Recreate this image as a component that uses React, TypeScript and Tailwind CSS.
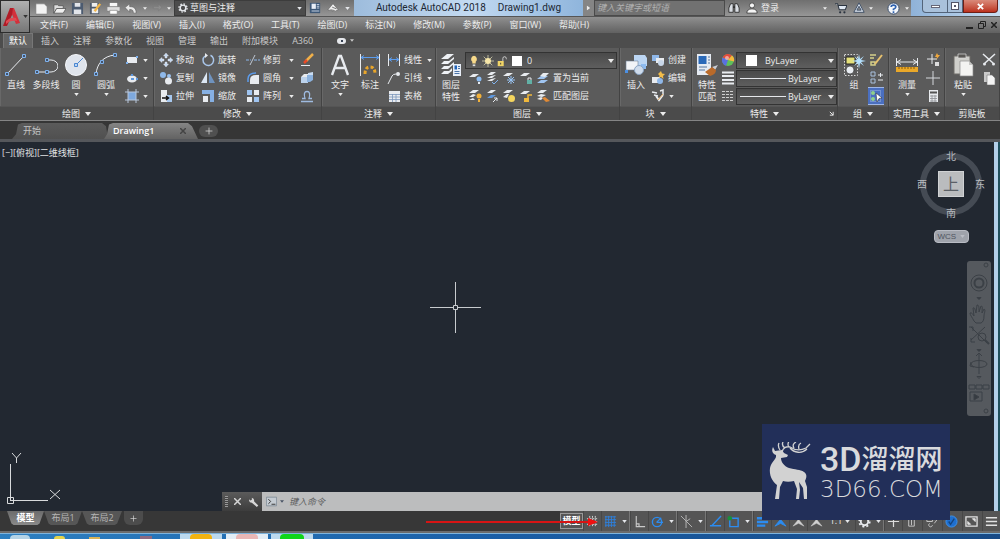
import type { ReactNode } from "react";

const menus = ["文件(F)", "编辑(E)", "视图(V)", "插入(I)", "格式(O)", "工具(T)", "绘图(D)", "标注(N)", "修改(M)", "参数(P)", "窗口(W)", "帮助(H)"];
const tabs = ["插入", "注释", "参数化", "视图", "管理", "输出", "附加模块", "A360"];

const W = "#e8ebef";
const B = "#7fb2ee";

// 24x24 drawings for the large ribbon buttons
const large: Record<string, ReactNode> = {
  line: (
    <g fill="none">
      <path d="M3 21 20 3" stroke={W} />
      <path d="M1.500 19.500h3v3h-3zM18.500 1.500h3v3h-3z" stroke={B} fill="#44546b" />
    </g>
  ),
  polyline: (
    <g fill="none">
      <path d="M3 19h14a7 6 0 0 0 0-12h-5" stroke={W} />
      <path d="M1.500 17.500h3v3h-3zM11.500 17.500h3v3h-3zM11.500 5.500h3v3h-3z" stroke={B} fill="#44546b" />
    </g>
  ),
  circle: (
    <g fill="none">
      <circle cx="12" cy="12" r="10.500" fill="#dfe4ec" stroke="#f5f7fa" />
      <path d="M12 12 19 5" stroke="#4a86d0" />
      <path d="M10.500 10.500h3v3h-3z" stroke="#4a86d0" fill="#bcd6f5" />
    </g>
  ),
  arc: (
    <g fill="none">
      <path d="M2 21C3 11 9 3 21 2" stroke={W} />
      <path d="M.5 19.500h3v3h-3zM6.500 7.500h3v3h-3zM19.500.5h3v3h-3z" stroke={B} fill="#44546b" />
    </g>
  ),
  text: <path d="m4 22 7-19h2l7 19M7 15h10" fill="none" stroke={W} strokeWidth="2.400" />,
  dimension: (
    <g fill="none">
      <path d="M2.500 1v22M21.500 1v22" stroke={W} />
      <path d="M3 4.500h18M6 2.500l-3 2 3 2M18 2.500l3 2-3 2" stroke="#5c9cec" />
      <path d="M7 21q0-7 5-7t5 7" stroke="#e9a62b" strokeWidth="3" strokeDasharray="3 2" />
    </g>
  ),
  layers: (
    <g>
      <path d="M2 6 8 1h7L9 6zM2 11l3-3h5l5-4v2l-6 5zM2 16l3-3h5l5-4v2l-6 5zM2 21l3-3h5l3-3v3l-4 3z" fill="#eef1f5" />
      <path d="M14 11h8v12h-8z" fill="#e8eef7" />
      <path d="M15.500 12.500h2.500v4h-2.500z" fill="#1f63b8" />
      <path d="M19 13.500h2M19 15.500h2M15.500 18.500h5M15.500 20.500h5" stroke="#4b74a8" />
    </g>
  ),
  insert: (
    <g>
      <path d="M10 2h11l2 3v8H10z" fill="#bcd6f3" />
      <path d="M2 8h12v9H2z" fill="#f2f4f7" stroke="#6b7f99" strokeWidth=".6" />
      <path d="M17 11h5v5h-5z" fill="#8dbbf0" />
      <circle cx="15" cy="17" r="4.500" fill="#cfdcec" stroke="#8aa4c4" />
      <path d="M1 17h3v3H1z" fill="#4d90e2" />
    </g>
  ),
  matchprops: (
    <g>
      <path d="M2 1h14v21H2z" fill="#e6ebf2" />
      <path d="M3.500 3h8v8h-8z" fill="#2a69b8" />
      <path d="M13 4h2M13 7h2M13 10h2M4 14h8M4 17h6" stroke="#55779f" />
      <path d="m23 12-6 2 3 3z" fill="#c9ccd2" />
      <path d="m17 14-7 5 5 4c4-1 6-3 6-6z" fill="#b96a2a" />
    </g>
  ),
  group: (
    <g>
      <path d="M2.500 1.500h13v21h-13z" fill="none" stroke="#d9d9d9" strokeDasharray="1.500 1.500" />
      <path d="M4 4h9v7H4z" fill="#e4e07a" stroke="#222" />
      <circle cx="8" cy="17" r="4" fill="#e9edf2" stroke="#222" strokeWidth=".6" />
      <path d="m17 1 1 5 4-3-3 4 5 1-5 1 3 4-4-3-1 6-1-6-4 3 3-4-5-1 5-1-3-4 4 3z" fill="#b4e1ff" />
    </g>
  ),
  measure: (
    <g>
      <path d="M1.500 5v8M22.500 5v8M2 9h20M6 6.500 2 9l4 2.500M18 6.500 22 9l-4 2.500" fill="none" stroke={W} />
      <path d="M1 14h22v5H1z" fill="#eaa829" />
      <path d="M4 14v2M7 14v2M10 14v2M13 14v2M16 14v2M19 14v2" stroke="#8a5b07" />
    </g>
  ),
  paste: (
    <g>
      <path d="M3 3h16v18H3z" fill="#cfcfcb" stroke="#6f6d69" />
      <path d="M7 1h8v4H7z" fill="#5a5855" stroke="#ddd" strokeWidth=".7" />
      <path d="M9 8h9l4 4v11H9z" fill="#f3f3f1" stroke="#8b8b89" strokeWidth=".7" />
      <path d="M18 8v4h4" fill="#c7c7c5" />
    </g>
  ),
};

// 14x14 drawings for the compact buttons
const small: Record<string, ReactNode> = {
  rect: <><path d="M2 4h10v6H2z" fill={W} /><path d="M1 9h2v2H1zM11 3h2v2h-2z" fill={B} /></>,
  ellipse: <><ellipse cx="7" cy="8" rx="5" ry="3.500" fill={W} /><path d="M6 7h3v2H6zM6 3h2v2H6zM11 7h2v2h-2z" fill="#5f98de" /></>,
  hatch: <><path d="M3 3h8v8H3z" fill="#7ea9df" /><path d="M3 0v14M11 0v14M0 3h14M0 11h14" stroke="#b8c7dc" /></>,
  move: <path d="m7 0 2.500 3H8v2H6V3H4.500zM7 14l2.500-3H8V9H6v2H4.500zM0 7l3-2.500V6h2v2H3v1.500zM14 7l-3-2.500V6H9v2h2v1.500z" fill="#c5d9f1" stroke={W} strokeWidth=".4" />,
  copy: <><circle cx="4" cy="4" r="3" fill="#8fb9ea" /><circle cx="10" cy="5" r="2" fill="#9cc2ee" /><circle cx="9.500" cy="10" r="3.500" fill={W} /></>,
  stretch: <><path d="M2 1h6v12H2z" fill={W} /><path d="M8 6h5v7H8z" fill="#a7c8ef" /><path d="M3 9h6M7 7l2.500 2L7 11" stroke="#111" fill="none" strokeWidth="1.500" /></>,
  rotate: <><path d="M9.500 2.300A5.300 5.300 0 1 1 4 3" fill="none" stroke="#a9c6ea" strokeWidth="1.500" /><path d="m4 0 3 2.500L4 5z" fill={W} /></>,
  mirror: <><path d="M6 1v11H0z" fill="#dce7f4" /><path d="M8 1v11h6z" fill="#6f93bf" /></>,
  scale: <><path d="M1 1h12v12H9V5H1z" fill="#86b0e3" /><path d="M2 7h5v6H2z" fill={W} /></>,
  trim: <><path d="M0 7h5M8 7h6" stroke="#8db8ec" strokeDasharray="3 1" /><path d="m4 12 5-10" stroke="#bfc8d4" /></>,
  fillet: <><path d="M4 13V9q0-5 6-5h3v9z" fill={W} /><path d="M2 11V8q0-6 8-6" fill="none" stroke="#5c9cec" strokeWidth="1.500" /></>,
  array: <><path d="M1 1h5v5H1z" fill="#9fc4f0" /><path d="M8 1h5v5H8zM1 8h5v5H1z" fill={W} /><path d="M8 8h5v5H8z" fill="#9fc4f0" /></>,
  erase: <><path d="M13 1 6 8" stroke="#f0b04a" strokeWidth="2.500" /><path d="M7 7 4 10" stroke="#e94b28" strokeWidth="2.500" /><path d="M1 12.500h9" stroke={W} /></>,
  explode: <><path d="M1 6h7v6H1z" fill="#bdd3ec" /><path d="m1 6 3-3h4v3z" fill={W} /><path d="M7 4h6v5l-3 2H7z" fill="#8cb2de" /><path d="m8 2 5-1v3H8z" fill="#c9dcf2" /></>,
  offset: <path d="M1 12.500h12M2 9.500h3q-2-7 2-7t2 7h3" fill="none" stroke="#9fbbe0" strokeWidth="1.300" />,
  linear: <><path d="M1.500 1v12M12.500 1v12" stroke={W} /><path d="M2 6.500h10M5 4.500l-3 2 3 2M9 4.500l3 2-3 2" stroke="#5c9cec" fill="none" /></>,
  leader: <><path d="M1 13 5 5q1-2 4-2" fill="none" stroke={W} /><circle cx="11" cy="3" r="2" fill={W} /></>,
  table: <><path d="M2 2h11v11H2z" fill={W} /><path d="M2 5.500h11M2 8h11M2 10.500h11M5.500 5v8M9 5v8" stroke="#7b97bb" strokeWidth=".8" /></>,
  bulb: <><path d="M7 1a4 4 0 0 0-2 7v2h4V8a4 4 0 0 0-2-7" fill="#f7d98a" /><path d="M5.500 11h3v2h-3z" fill="#ddd" /></>,
  sun: <><path d="M7 0v14M0 7h14M2 2l10 10M12 2 2 12" stroke="#cdc9a6" /><circle cx="7" cy="7" r="3.500" fill="#f6e6a8" /></>,
  lock: <><path d="M2 7h7v6H2z" fill="#f0d467" /><path d="M8 7V4q0-2 2-2t2 2v1" fill="none" stroke="#ddd" /><path d="M5 9h1v2H5z" fill="#333" /></>,
  layerOff: <><path d="m1 6 4-3h6L7 6z" fill={W} /><circle cx="11" cy="8" r="2.500" fill="#8cbcf2" /><path d="M10 11h2v2h-2z" fill={W} /></>,
  layerIso: <><path d="m2 4 4-3h5L7 4zM2 7l4-2 5-1-4 3zM2 10l4-2 5-1-4 3z" fill={W} /><path d="m7 11 2 2 4-4" stroke={B} fill="none" /></>,
  layerFreeze: <><path d="m1 5 4-3h6L7 5z" fill={W} /><path d="M9 5v8M5 9h8M6 6l6 6M12 6l-6 6" stroke="#9ac5f5" /></>,
  layerLock: <><path d="m1 5 4-3h6L7 5z" fill={W} /><path d="M8 9h5v4H8z" fill="#62b1a6" /><path d="M9 9V7h3v2" fill="none" stroke={W} /></>,
  layerSet: <><path d="m1 12 4-3h7l-4 3zM1 8l4-3h7L8 8z" fill="#9fc4f0" /><path d="m4 5 3-3h6L9 6z" fill={W} /></>,
  layerOn: <><path d="m1 4 4-3h6L7 4zM1 8l4-3 3 1-3 2zM1 11l4-2 2 2z" fill={W} /><circle cx="11" cy="7" r="2.500" fill="#f2b13a" /><path d="M10 10h2v3h-2z" fill="#f2b13a" /></>,
  layerUniso: <><path d="m2 4 4-3h5L7 4z" fill={W} /><path d="m2 9 4-3h5L7 9z" fill="#5f98de" /><path d="m8 13 4-4M9 9h3v3" stroke={W} fill="none" /></>,
  layerThaw: <><path d="m1 4 4-3h6L7 4zM1 8l4-3h2L5 9z" fill={W} /><circle cx="9.500" cy="9.500" r="3.500" fill="#f4d55e" /></>,
  layerUnlock: <><path d="m1 5 4-3h6L7 5z" fill={W} /><path d="M5 9h5v4H5z" fill="#f0b83c" /><path d="M9 9V6h4" fill="none" stroke="#f0b83c" strokeWidth="1.500" /></>,
  layerMatch: <><path d="m1 4 4-3h6L7 4zM1 7l4-2 5 1-4 2zM1 10l4-2 2 1-2 2z" fill={W} /><path d="m6 9 3-1 5 4-4 1z" fill="#e18a35" /></>,
  blockCreate: <><path d="M1 2h7v6H1z" fill="#8fb7e8" /><path d="M5 5h8v5H5z" fill={W} /><circle cx="10" cy="10" r="3" fill="#c7d6e8" /></>,
  blockEdit: <><path d="M1 6h8v6H1z" fill={W} /><circle cx="9" cy="10" r="3" fill="#8fb7e8" /><path d="m10 0 1 2.500 3 .5-2 2 .5 3L10 6 8 7l.5-2.500L7 3z" fill="#f3bd4a" /></>,
  blockAttr: <><path d="m1 3 5 1M3 6l4 1M9 2l3-1v5" stroke={W} fill="none" strokeWidth="1.500" /><path d="m5 7 3 4 4-5" stroke={W} fill="none" strokeWidth="2" /><path d="m7 11 5-6" stroke="#e9ae61" /></>,
  wheel: <><circle cx="7" cy="7" r="6" fill="#5fbf5a" /><path d="M7 7 1.500 4.500A6 6 0 0 1 11 2.500z" fill="#e24a3b" /><path d="m7 7 4-4.500a6 6 0 0 1 2 6z" fill="#f5b83b" /><path d="M7 7 1.500 4.500A6 6 0 0 0 5 12.700z" fill="#5a6fe0" /><circle cx="6" cy="5" r="2" fill="#fff" opacity=".5" /></>,
  weight: <path d="M1 1.500h12M1 5h12M1 9h12M1 12.500h12" stroke={W} strokeWidth="1.800" />,
  linetype: <path d="M1 2.500h12M1 5.500h12M1 8.500h12M1 11.500h12" stroke="#cfcfcf" strokeDasharray="3 1" />,
  ungroup: <><path d="M1 2h6M1 5h4M2 9h4v3H2z" stroke="#d5d08a" fill="none" strokeWidth="1.500" /><path d="m6 11 7-9" stroke="#e7c16e" strokeWidth="2" /></>,
  groupEdit: <><path d="M2 1h4v4H2zM2 8h4v4H2z" fill="none" stroke="#a9c1de" /><path d="M9 4h5M9 9h5M11.500 2v4" stroke={W} /></>,
  groupSelect: <><path d="M1.500 1.500h10v11h-10z" fill="none" stroke="#9db6e2" strokeDasharray="1 1" /><circle cx="4" cy="4" r="2" fill="#8fd08c" /><circle cx="4" cy="10" r="2" fill="#8fd08c" /><path d="m7 4 6 5-3 .5L8 13z" fill="#fff" stroke="#222" strokeWidth=".5" /></>,
  quickselect: <><path d="M6 1v10M1 6h10" stroke={W} /><path d="M9 9h4v4H9z" fill="#ddd" /><path d="m11 0-2 4h2l-1 3 4-5h-2z" fill="#f0a83c" /></>,
  point: <path d="M7 0v5M7 9v5M0 7h5M9 7h5M6 6h2v2H6z" fill="none" stroke="#d5d8dc" />,
  calc: <><path d="M3 1h9v12H3z" fill={W} /><path d="M4 3.500h7" stroke="#555" strokeWidth="2" /><path d="M4 7h7M4 9.500h7M4 12h7M6 6v7M9 6v7" stroke="#8a8d92" strokeWidth=".8" /></>,
  cut: <><path d="m1 1 10 9M13 1 3 10" stroke={W} strokeWidth="1.500" /><circle cx="2.500" cy="11" r="1.500" fill={W} /><circle cx="11.500" cy="11" r="1.500" fill={W} /></>,
  pages: <><path d="M2 1h6v10H2z" fill="#c9c9c9" /><path d="M5 4h5l3 3v7H5z" fill="#f4f4f4" stroke="#777" strokeWidth=".6" /></>,
  newfile: <path d="M1 2h9l3 3v8H1z" fill="#f3f3f3" stroke="#777" strokeWidth=".6" />,
  open: <><path d="M1 3h4l1 1h5v3H4l-3 5z" fill="#ddd" stroke="#444" strokeWidth=".7" /><path d="M4 7h10l-3 5H1z" fill="#f0f0f0" stroke="#444" strokeWidth=".7" /></>,
  save: <><path d="M1 1h12v12H1z" fill="#4c5b70" /><path d="M4 1h6v4H4zM3 8h8v5H3z" fill="#e2e5ea" /></>,
  saveas: <><path d="M1 1h10v12H1z" fill="#4f5a6b" /><path d="M3 7h7v5H3zM3 1h6v4H3z" fill="#eee" /><path d="m6 10 6-8" stroke="#f3b647" strokeWidth="2.500" /></>,
  print: <><path d="M3 1h8v4H3z" fill="#f7f7f7" /><path d="M0 5h14v5H0z" fill="#dedede" stroke="#666" strokeWidth=".6" /><path d="M3 9h8v4H3z" fill="#fff" stroke="#777" strokeWidth=".6" /></>,
  undo: <path d="M0 6 5 2v3c5 0 7 2 7 7H9C9 9 8 8 5 8v3z" fill="#e9e9e9" stroke="#555" strokeWidth=".6" />,
  redo: <path d="M14 6 9 2v3H2v3h7v3z" fill="#8d8d8d" stroke="#777" strokeWidth=".6" />,
  gear: <><circle cx="7" cy="7" r="4" fill="none" stroke={W} strokeWidth="2" /><circle cx="7" cy="7" r="5.700" fill="none" stroke={W} strokeWidth="1.800" strokeDasharray="2.200 2.270" /></>,
  sheet: <><path d="M1 1h12v12H1z" fill="#3d5877" /><path d="M3 2h5v6H3z" fill="#e8eef7" /><path d="M9 3h3M9 5h3M9 7h3M3 10.500h9" stroke="#d7e3f2" /></>,
  plan: <><path d="m1 9 6-7 6 7-4 2z" fill="#eee" stroke="#555" strokeWidth=".6" /><path d="M4 9l5 1M6 6l5 2" stroke="#666" /></>,
  find: <><path d="M1 12V7l2-5h3v10zM8 12V2h3l2 5v5z" fill="#d9dde3" stroke="#292929" /><path d="M6 6h2" stroke="#292929" strokeWidth="2" /></>,
  user: <><circle cx="7" cy="4" r="3" fill="#f4f4f4" stroke="#3a3a3a" /><path d="M1 13q0-5 6-5t6 5z" fill="#f4f4f4" stroke="#3a3a3a" /></>,
  cart: <><path d="M0 2h3l2 7h7l2-5H4" fill="#dfe8f2" stroke="#2b3440" strokeWidth="1.200" /><circle cx="6" cy="12" r="1.300" fill="#2b3440" /><circle cx="11" cy="12" r="1.300" fill="#2b3440" /></>,
  a360: <><path d="m7 1 6 11H1z" fill="#dbe3ee" stroke="#33455e" /><path d="m7 5 2.500 4.500h-5z" fill="#8e8e8e" stroke="#33455e" /></>,
  help: <><circle cx="7" cy="7" r="6" fill="#f5f8fc" stroke="#34496b" /><path d="M4.500 5.500Q4.500 3.300 7 3.300t2.500 2Q9.500 6.500 7 7.700V9M7 10v1.800" fill="none" stroke="#2f62b0" strokeWidth="1.800" /></>,
  wrench: <path d="m13 12-6-6q1-4-3-5v3L2 5 0 3q0 5 4 5l7 6z" fill="#d7d7d7" />,
  prompt: <><path d="M.5 1.500h13v11H.5z" fill="#c4cbd2" stroke="#7c8894" /><path d="m3 4 3 3-3 3M7 10.500h5" fill="none" stroke="#333" strokeWidth="1.200" /></>,
  snap: <path d="M4 1v12M7 1v12M10 1v12M1 4h12M1 7h12M1 10h12" stroke="#d8d8d8" strokeDasharray="2 1" />,
  grid: <path d="M2 1v12M5 1v12M8 1v12M11 1v12M1 2h12M1 5h12M1 8h12M1 11h12" stroke="#2f7fdc" />,
  ortho: <path d="M3.500 1v11.500H13M3.500 9.500h3v3" fill="none" stroke="#c9c9c9" strokeWidth="1.200" />,
  polar: <><circle cx="6.500" cy="7.500" r="5" fill="none" stroke="#2c8cf0" strokeWidth="1.500" /><path d="M6 8h7M6 8l5-5" stroke="#2c8cf0" strokeWidth="1.300" /></>,
  iso: <path d="m1 1 12 12M6.500 0v14M6.500 7 11 4" stroke="#b9b9b9" />,
  track: <path d="M13 1 3 11.500h10M1 11.500h2" stroke="#2c8cf0" strokeWidth="1.500" fill="none" />,
  osnap: <><path d="M3 3.500h9v9H3z" fill="none" stroke="#2c8cf0" strokeWidth="1.500" /><circle cx="3" cy="3.500" r="2.500" fill="#18903c" /></>,
  lwt: <path d="M1 3.500h9M1 7.500h12M1 11.500h9" stroke="#2c8cf0" strokeWidth="2.500" />,
  annoBlue: <path d="m7 1 1 5 5 6-6-3-6 3 5-6z" fill="#2c8cf0" stroke="#2c8cf0" />,
  anno: <path d="m7 1 1 5 5 6-6-3-6 3 5-6z" fill="#d0d0d0" stroke="#d0d0d0" strokeWidth=".5" />,
  plus: <path d="M7 1v12M1 7h12" stroke="#dcdcdc" strokeWidth="1.300" />,
  monitor: <path d="M3 4h8M4 4v8h6V4M7 5v6M5 2h4" stroke="#c9c9c9" fill="none" />,
  isolate: <path d="M2 2h6v5H2zM8 5h5l-3 4M5 9a2 2 0 1 0 3 2" stroke="#c9c9c9" fill="none" />,
  accel: <><circle cx="7" cy="7" r="6" fill="#1e6fd0" stroke="#3d93ee" /><path d="m4 7 2 3 4-6" stroke="#15457f" fill="none" strokeWidth="1.500" /></>,
  full: <><path d="M1 2h12v10H1z" fill="none" stroke="#e2e2e2" strokeWidth="1.400" /><path d="M8 4h3v3zM3 7v3h3z" fill="#e2e2e2" stroke="#e2e2e2" /></>,
  bars: <path d="M1 3h12M1 7h12M1 11h12" stroke="#e2e2e2" strokeWidth="1.500" />,
};

function Big({ name }: { name: string }) {
  return (
    <svg viewBox="0 0 24 24" className="size-6 shrink-0" aria-hidden="true">
      {large[name]}
    </svg>
  );
}

function Sm({ name, className = "size-[14px]" }: { name: string; className?: string }) {
  return (
    <svg viewBox="0 0 14 14" className={`shrink-0 ${className}`} aria-hidden="true">
      {small[name]}
    </svg>
  );
}

function Caret({ className = "w-[5px] h-[3px] text-gray-200" }: { className?: string }) {
  return (
    <svg viewBox="0 0 6 4" className={`shrink-0 ${className}`} aria-hidden="true">
      <path d="M0 0h6L3 4z" fill="currentColor" />
    </svg>
  );
}

function BigButton({ icon, lines, caret, className = "w-[30px]" }: { icon: string; lines: string[]; caret?: boolean; className?: string }) {
  return (
    <button className={`flex flex-col items-center pt-[5px] shrink-0 ${className}`}>
      <Big name={icon} />
      <span className="mt-[2px] flex flex-col whitespace-nowrap leading-3">
        {lines.map((l) => (
          <span key={l}>{l}</span>
        ))}
      </span>
      {caret && <Caret className="w-[5px] h-[3px] mt-[2px]" />}
    </button>
  );
}

function Tool({ icon, label, caret, gap = "ml-[8px]" }: { icon: string; label?: string; caret?: boolean; gap?: string }) {
  return (
    <button className="flex items-center h-[18px] whitespace-nowrap" aria-label={label ?? icon}>
      <Sm name={icon} />
      {label && <span className="ml-[3px]">{label}</span>}
      {caret && <Caret className={`w-[5px] h-[3px] ${gap}`} />}
    </button>
  );
}

function Panel({ title, caret = true, launcher, children }: { title: string; caret?: boolean; launcher?: boolean; children: ReactNode }) {
  return (
    <section className="flex flex-col border-r border-[#434343] shadow-[inset_1px_0_0_#686868] min-w-0">
      <div className="flex h-[58px] pl-px">{children}</div>
      <footer className="relative flex items-center justify-center gap-[5px] h-[14px] bg-[#4b4b4b] border-t border-[#555] whitespace-nowrap">
        {title}
        {caret && <Caret className="w-[6px] h-[4px]" />}
        {launcher && (
          <button aria-label="特性选项板" className="absolute right-[3px]">
            <svg viewBox="0 0 6 6" className="size-[5px]" aria-hidden="true">
              <path d="M1 1l4 4M5 1v4H1" stroke="#e5e5e5" fill="none" strokeWidth="1.200" />
            </svg>
          </button>
        )}
      </footer>
    </section>
  );
}

function Combo({ label, value, pad, swatch, line }: { label: string; value: string; pad: string; swatch?: boolean; line?: boolean }) {
  return (
    <div className="flex items-center h-[17px] pl-[3px] pr-[2px] border border-[#333] bg-linear-to-b from-[#4a4a4a] to-[#5e5e5e]">
      {swatch && <span className="size-[11px] ml-[6px] bg-white" />}
      {line && <span className="flex-1 h-px bg-gray-200" />}
      <select aria-label={label} className={`appearance-none outline-none bg-transparent leading-3 ${pad}`}>
        <option>{value}</option>
      </select>
      <Caret className="w-[6px] h-[4px] ml-auto" />
    </div>
  );
}

function TitleBar() {
  return (
    <div className="flex h-[17px] bg-linear-to-b from-[#6f6f6f] to-[#969696] border-b border-[#555]">
      <div className="flex items-center pl-[5px] gap-[5px] w-[144px] shrink-0">
        {["newfile", "open", "save", "saveas", "print", "undo"].map((n) => (
          <button key={n} aria-label={n}>
            <Sm name={n} className="size-[13px]" />
          </button>
        ))}
        <Caret className="w-[4px] h-[3px]" />
        <Sm name="redo" className="size-[10px]" />
        <Caret className="w-[4px] h-[3px]" />
      </div>
      <label className="flex items-center gap-[2px] w-[132px] shrink-0 px-[3px] bg-[#4c4c4c] border border-[#3c3c3c]">
        <Sm name="gear" className="size-[10px]" />
        <select aria-label="工作空间" className="appearance-none outline-none bg-transparent flex-1 leading-3">
          <option>草图与注释</option>
        </select>
        <Caret />
      </label>
      <div className="flex items-center gap-[6px] pl-[3px] w-[48px] shrink-0">
        <Sm name="sheet" className="size-[12px]" />
        <Sm name="plan" className="size-[12px]" />
        <Caret />
      </div>
      <h1 className="flex items-center justify-center gap-3 grow-[229] basis-0 font-[Roboto,sans-serif] text-[10px] text-[#1c2733] whitespace-nowrap bg-linear-to-r from-[#9dbcdc] via-[#c3daf1] to-[#8fb5dc]">
        <span>Autodesk AutoCAD 2018</span>
        <span>Drawing1.dwg</span>
      </h1>
      <button aria-label="展开搜索" className="flex items-center justify-center w-[11px] shrink-0 bg-[#858585]">
        <Caret className="w-[5px] h-[4px] -rotate-90" />
      </button>
      <input
        aria-label="搜索"
        placeholder="键入关键字或短语"
        className="grow-[125] basis-0 min-w-0 px-[2px] bg-[#717171] border border-[#4a4a4a] italic outline-none placeholder:text-[#b2b2b2]"
      />
      <div className="flex items-center w-[186px] shrink-0 pl-[3px]">
        <Sm name="find" className="size-[12px]" />
        <Sm name="user" className="size-[12px] ml-[6px]" />
        <a href="#login" className="ml-[3px]">登录</a>
        <Caret className="w-[4px] h-[3px] ml-[44px]" />
        <Sm name="cart" className="size-[12px] ml-[8px]" />
        <Sm name="a360" className="size-[12px] ml-[6px]" />
        <Caret className="w-[4px] h-[3px] ml-[4px]" />
        <Sm name="help" className="size-[13px] ml-[14px]" />
        <Caret className="w-[4px] h-[3px] ml-[5px]" />
      </div>
      <div className="flex justify-end w-[89px] shrink-0 pr-[2px] bg-linear-to-r from-[#8fb2d8] to-[#c8def2]">
        <button aria-label="最小化" className="flex items-end justify-center w-[26px] h-[13px] pb-[4px] rounded-bl bg-[#a9c1db] border border-t-0 border-[#53647a]">
          <span className="w-[9px] h-[3px] bg-white border border-[#667]" />
        </button>
        <button aria-label="还原" className="flex items-center justify-center w-[15px] h-[13px] bg-[#a9c1db] border border-t-0 border-l-0 border-[#53647a]">
          <span className="grid place-items-center size-[8px] bg-white border border-[#556]">
            <span className="size-[2px] bg-[#556]" />
          </span>
        </button>
        <button aria-label="关闭" className="flex items-center justify-center w-[35px] h-[13px] rounded-br bg-linear-to-b from-[#d98a7a] to-[#bb2f1c] border border-t-0 border-[#6d1f16]">
          <svg viewBox="0 0 8 8" className="size-[7px]" aria-hidden="true">
            <path d="m1 1 6 6M7 1 1 7" stroke="#fff" strokeWidth="2" />
          </svg>
        </button>
      </div>
    </div>
  );
}

function Ribbon() {
  return (
    <div className="grid grid-cols-[154fr_168fr_114fr_184fr_72fr_146fr_51fr_56fr_55fr] bg-[#5b5b5b] border-b border-[#858585]">
      <Panel title="绘图">
        <BigButton icon="line" lines={["直线"]} />
        <BigButton icon="polyline" lines={["多段线"]} />
        <BigButton icon="circle" lines={["圆"]} caret />
        <BigButton icon="arc" lines={["圆弧"]} caret />
        <div className="pt-[3px] pl-[4px]">
          <Tool icon="rect" caret gap="ml-[4px]" />
          <Tool icon="ellipse" caret gap="ml-[4px]" />
          <Tool icon="hatch" caret gap="ml-[4px]" />
        </div>
      </Panel>
      <Panel title="修改">
        <div className="grid grid-cols-[42px_45px_54px_18px] content-start pt-[3px] pl-[4px]">
          <Tool icon="move" label="移动" />
          <Tool icon="rotate" label="旋转" />
          <Tool icon="trim" label="修剪" caret />
          <Tool icon="erase" />
          <Tool icon="copy" label="复制" />
          <Tool icon="mirror" label="镜像" />
          <Tool icon="fillet" label="圆角" caret />
          <Tool icon="explode" />
          <Tool icon="stretch" label="拉伸" />
          <Tool icon="scale" label="缩放" />
          <Tool icon="array" label="阵列" caret />
          <Tool icon="offset" />
        </div>
      </Panel>
      <Panel title="注释">
        <div className="flex pl-[2px]">
          <BigButton icon="text" lines={["文字"]} caret />
          <BigButton icon="dimension" lines={["标注"]} />
          <div className="pt-[3px] pl-[2px]">
            <Tool icon="linear" label="线性" caret gap="ml-[5px]" />
            <Tool icon="leader" label="引线" caret gap="ml-[5px]" />
            <Tool icon="table" label="表格" />
          </div>
        </div>
      </Panel>
      <Panel title="图层">
        <BigButton icon="layers" lines={["图层", "特性"]} className="w-[28px]" />
        <div className="flex-1 pt-[4px] pr-[2px]">
          <div className="flex items-center gap-[2px] h-[17px] pl-[2px] pr-[2px] border border-[#333] bg-linear-to-b from-[#4a4a4a] to-[#5e5e5e]">
            <Sm name="bulb" className="size-[12px]" />
            <Sm name="sun" className="size-[12px]" />
            <Sm name="lock" className="size-[12px]" />
            <span className="size-[10px] ml-[2px] bg-white" />
            <select aria-label="图层" className="appearance-none outline-none bg-transparent flex-1 pl-[3px] leading-3">
              <option>0</option>
            </select>
            <Caret className="w-[6px] h-[4px]" />
          </div>
          <div className="flex gap-[3px] pl-[3px]">
            {["layerOff", "layerIso", "layerFreeze", "layerLock"].map((n) => (
              <Tool key={n} icon={n} />
            ))}
            <Tool icon="layerSet" label="置为当前" />
          </div>
          <div className="flex gap-[3px] pl-[3px]">
            {["layerOn", "layerUniso", "layerThaw", "layerUnlock"].map((n) => (
              <Tool key={n} icon={n} />
            ))}
            <Tool icon="layerMatch" label="匹配图层" />
          </div>
        </div>
      </Panel>
      <Panel title="块">
        <BigButton icon="insert" lines={["插入"]} />
        <div className="pt-[3px]">
          <Tool icon="blockCreate" label="创建" />
          <Tool icon="blockEdit" label="编辑" />
          <Tool icon="blockAttr" caret gap="ml-[4px]" />
        </div>
      </Panel>
      <Panel title="特性" launcher>
        <BigButton icon="matchprops" lines={["特性", "匹配"]} className="w-[28px]" />
        <div className="pt-[3px]">
          <Tool icon="wheel" />
          <Tool icon="weight" />
          <Tool icon="linetype" />
        </div>
        <div className="flex flex-col flex-1 gap-px pt-[4px] pl-px">
          <Combo label="对象颜色" value="ByLayer" pad="ml-[8px]" swatch />
          <Combo label="线宽" value="ByLayer" pad="ml-[2px] mr-[6px]" line />
          <Combo label="线型" value="ByLayer" pad="ml-[2px] mr-[6px]" line />
        </div>
      </Panel>
      <Panel title="组">
        <BigButton icon="group" lines={["组"]} />
        <div className="pt-[3px]">
          <Tool icon="ungroup" />
          <Tool icon="groupEdit" />
          <div className="-ml-px px-px bg-[#4a6fc0] border-y border-[#9fb6e6]">
            <button className="flex items-center h-4" aria-label="组选择">
              <Sm name="groupSelect" />
            </button>
          </div>
        </div>
      </Panel>
      <Panel title="实用工具">
        <BigButton icon="measure" lines={["测量"]} caret className="w-[34px]" />
        <div className="pt-[3px] pl-[2px]">
          <Tool icon="quickselect" />
          <Tool icon="point" />
          <Tool icon="calc" />
        </div>
      </Panel>
      <Panel title="剪贴板" caret={false}>
        <BigButton icon="paste" lines={["粘贴"]} caret className="w-[34px]" />
        <div className="pt-[3px] pl-[2px]">
          <Tool icon="cut" />
          <Tool icon="pages" />
        </div>
      </Panel>
    </div>
  );
}

function FileTabs() {
  return (
    <nav className="flex items-end h-[21px] pl-[12px] bg-[#363636] border-b-[3px] border-[#55575b]">
      <a href="#start" className="flex items-center w-[96px] h-[16px] pl-[11px] text-[#c4c4c4] bg-linear-to-b from-[#5b5b5b] to-[#505050] [clip-path:polygon(0_100%,4px_70%,6px_10%,10px_0,90px_0,94px_20%,100%_100%)]">
        开始
      </a>
      <div className="flex items-center w-[94px] h-[16px] -ml-[4px] pl-[9px] pr-[12px] bg-linear-to-b from-[#858585] to-[#636363] [clip-path:polygon(0_100%,3px_70%,5px_10%,9px_0,84px_0,88px_20%,100%_100%)]">
        <a href="#drawing1" className="font-semibold text-white">Drawing1</a>
        <button aria-label="关闭图形" className="ml-auto">
          <svg viewBox="0 0 6 6" className="size-[6px]" aria-hidden="true">
            <path d="m0 0 6 6M6 0 0 6" stroke="#444" strokeWidth="1.500" />
          </svg>
        </button>
      </div>
      <button aria-label="新图形" className="flex items-center justify-center w-[19px] h-[12px] mb-[2px] ml-px rounded-md bg-[#505050]">
        <Sm name="plus" className="size-[8px]" />
      </button>
    </nav>
  );
}

function ViewCube() {
  return (
    <div className="absolute top-[8px] right-[9px] flex flex-col items-center w-[68px] text-[10px] text-[#b9bcc0]">
      <div className="relative grid place-items-center size-[68px]">
        <div className="absolute size-[62px] rounded-full border-[6px] border-[#454b54]" />
        <span className="absolute top-0 leading-3">北</span>
        <span className="absolute -bottom-px leading-3">南</span>
        <span className="absolute left-0 leading-3">西</span>
        <span className="absolute right-0 leading-3">东</span>
        <span className="relative grid place-items-center size-[26px] bg-[#babcbe] border border-[#d0d2d4] text-[16px] leading-4 text-[#5b6066]">上</span>
      </div>
      <button className="flex items-center w-[35px] h-[13px] mt-[12px] px-[3px] rounded-sm bg-[#9fa3ab] border border-[#b9bcc4] font-['Liberation_Sans',sans-serif] text-[8px] text-[#4f545e]">
        WCS <Caret className="w-[5px] h-[3px] ml-auto text-[#bbbec6]" />
      </button>
    </div>
  );
}

function NavBar() {
  return (
    <div className="absolute top-[119px] right-[3px] w-[24px] rounded-[3px] bg-[#55595e]">
      <svg viewBox="0 0 24 155" className="w-full" fill="none" stroke="#3b4046" aria-hidden="true">
        <circle cx="19" cy="4" r="2" />
        <circle cx="12" cy="22" r="8" />
        <circle cx="12" cy="22" r="4.500" strokeWidth="2" />
        <path d="M10 36.500h4l-2 2z" fill="#363b41" />
        <path d="M7 60c-2-4-4-6-4-8 2-1 3 2 4 3l-1-8c2-1 2 2 3 5l1-8c2 0 2 2 2 7l2-6c2 0 1 3 1 7l2-4c2 1 0 4 0 7 0 4-1 6-3 7H9z" />
        <path d="m4 66 16 16M18 66 4 79M2 66h4v4M4 77v4h4" />
        <circle cx="15" cy="76" r="4" />
        <path d="m18 79 4 4" strokeWidth="2" />
        <path d="M10 88.500h4l-2 2z" fill="#363b41" />
        <path d="M12 92v21M9 95l3-3 3 3" />
        <ellipse cx="12" cy="103" rx="8" ry="3.500" />
        <path d="m4 101-1 4 4 1M10 115.500h4l-2 2z" />
        <path d="M2 124h6v4H2zM9 124h6v4H9zM16 124h6v4h-6zM3 131h12v9H3z" />
        <path d="m7 133 5 3-5 3z" fill="#363b41" />
        <circle cx="19" cy="150" r="2" />
      </svg>
    </div>
  );
}

function Canvas() {
  return (
    <main className="flex flex-1">
      <div className="relative flex-1 bg-[#222831]">
        <p className="pl-[2px] pt-[5px] leading-3 text-[#e0e2e4]">[−][俯视][二维线框]</p>

        <svg viewBox="0 0 51 51" className="absolute left-[430px] top-[140px] size-[51px]" fill="none" stroke="#c8cbce" aria-hidden="true">
          <path d="M25.500 0v23M25.500 28v23M0 25.500h23M28 25.500h23M23.500 23.500h4v4h-4z" />
        </svg>

        <svg viewBox="0 0 56 54" className="absolute left-[6px] bottom-[6px] w-[56px] h-[54px]" fill="none" stroke="#d8dadc" aria-hidden="true">
          <path d="M4.500 13v37M4.500 49.500H42M1.500 46.500h6v6h-6z" />
          <path d="m6 2 4.500 5L15 2M10.500 7v5M44 39l10 9M54 39l-10 9" />
        </svg>

        <ViewCube />
        <NavBar />

        <form className="absolute bottom-0 left-[222px] right-[114px] flex h-[19px] bg-[#bcbdbe]">
          <div className="flex items-center gap-[12px] w-[40px] pl-[3px] bg-linear-to-b from-[#5b5b5b] to-[#3d3d3d]">
            <span className="w-[3px] h-[12px] bg-[repeating-linear-gradient(#999_0_1px,#444_1px_2px)]" />
            <svg viewBox="0 0 7 7" className="size-[7px] -ml-[6px] shrink-0" aria-hidden="true">
              <path d="m0 0 7 7M7 0 0 7" stroke="#d5d5d5" strokeWidth="1.500" />
            </svg>
            <Sm name="wrench" className="size-[10px] -ml-[4px]" />
          </div>
          <div className="flex items-center gap-[3px] flex-1 pl-[4px] text-gray-700">
            <Sm name="prompt" className="size-[11px]" />
            <Caret className="w-[4px] h-[3px] text-gray-600" />
            <input aria-label="命令行" placeholder="键入命令" className="flex-1 ml-[2px] bg-transparent outline-none italic placeholder:text-[#5c5d5f]" />
          </div>
        </form>
      </div>
      <div className="w-[4px] bg-[#b3cfe9]" />
      <div className="w-[2px] bg-[#1f4f5c]" />
    </main>
  );
}

function StatusButton({ icon, caret }: { icon: string; caret?: boolean }) {
  return (
    <>
      <button aria-label={icon} className="flex items-center justify-center w-[18px] border-l border-[#474747]">
        <Sm name={icon} className="size-[13px]" />
      </button>
      {caret && (
        <button aria-label="更多" className="flex items-center justify-center w-[11px] border-r border-[#777]">
          <Caret />
        </button>
      )}
    </>
  );
}

function StatusBar() {
  return (
    <div className="relative flex h-[22px] bg-[#373737] border-b-2 border-[#6b6b6b]">
      <nav className="flex h-[14px] pl-[7px]">
        <a href="#model" className="flex items-center justify-center w-[37px] font-bold text-white bg-linear-to-b from-[#6c6c6c] to-[#898989] [clip-path:polygon(0_0,100%_0,88%_90%,82%_100%,18%_100%,12%_90%)]">模型</a>
        <a href="#layout1" className="flex items-center justify-center w-[38px] text-[#b5b5b5] bg-[#565656] [clip-path:polygon(0_0,100%_0,88%_90%,82%_100%,18%_100%,12%_90%)]">布局1</a>
        <a href="#layout2" className="flex items-center justify-center w-[40px] text-[#b5b5b5] bg-[#565656] [clip-path:polygon(0_0,100%_0,88%_90%,82%_100%,18%_100%,12%_90%)]">布局2</a>
        <button aria-label="新建布局" className="flex items-center justify-center w-[19px] ml-[2px] rounded-b-md bg-[#4c4c4c]">
          <Sm name="plus" className="size-[7px]" />
        </button>
      </nav>
      <div className="flex ml-auto bg-[#555]">
        <button className="w-[23px] my-[2px] font-bold text-white border border-[#999] whitespace-nowrap leading-3">模型</button>
        <StatusButton icon="snap" />
        <StatusButton icon="grid" caret />
        <StatusButton icon="ortho" />
        <StatusButton icon="polar" caret />
        <StatusButton icon="iso" caret />
        <StatusButton icon="track" />
        <StatusButton icon="osnap" caret />
        <StatusButton icon="lwt" />
        <StatusButton icon="annoBlue" />
        <StatusButton icon="anno" />
        <StatusButton icon="anno" />
        <button className="flex items-center justify-center gap-[3px] w-[30px]">
          1:1 <Caret />
        </button>
        <StatusButton icon="gear" caret />
        <StatusButton icon="plus" />
        <div className="flex gap-[2px]">
          <StatusButton icon="monitor" />
          <StatusButton icon="isolate" />
          <StatusButton icon="accel" />
          <StatusButton icon="full" />
          <StatusButton icon="bars" />
        </div>
      </div>
      <svg viewBox="0 0 172 8" className="absolute right-[402px] top-[7px] w-[172px] h-[8px]" aria-hidden="true">
        <path d="M0 3h164v2H0z" fill="#d81414" />
        <path d="m162 0 10 4-10 4z" fill="#f01010" />
      </svg>
    </div>
  );
}

function Taskbar() {
  return (
    <div className="flex items-end h-[6px] pl-[10px] overflow-hidden bg-linear-to-r from-[#2d7fc0] via-[#1a5ea6] to-[#174a86] border-t border-[#7fb4dc]">
      <span className="w-[20px] h-[4px] rounded-t-full bg-[#b4d3e6]" />
      <span className="w-[11px] h-[3px] ml-[24px] rounded-t-full bg-[#e5d44b]" />
      <span className="w-[11px] h-[2px] ml-[24px] bg-[#d9b457]" />
      <span className="w-[12px] h-[3px] ml-[40px] bg-[#8c6a82]" />
      <span className="flex justify-center w-[42px] h-[5px] ml-[28px] px-[10px] bg-[#bcd9ee]"><i className="w-full rounded-t bg-[#f2b311]" /></span>
      <span className="flex justify-center w-[42px] h-[5px] ml-[4px] px-[10px] bg-[#e3eef6]"><i className="w-full rounded-t bg-[#e9b7b5]" /></span>
      <span className="flex justify-center w-[42px] h-[5px] ml-[3px] px-[9px] bg-[#bcd9ee]"><i className="w-full rounded-t bg-[#0fd51a]" /></span>
    </div>
  );
}

function Watermark() {
  return (
    <div className="absolute right-[50px] bottom-[19px] flex items-center w-[188px] h-[96px] pl-[6px] bg-[#222f59] text-[#d9dadd]">
      <svg viewBox="0 0 48 60" className="w-[48px] h-[60px] shrink-0" aria-hidden="true">
        <path
          d="M5 5l2 4 7-1 2 3 4 2-1 2-6 1c0 4 3 8 8 10 6 2 11 1 15 4 3 2 3 5 1 9l2 6v12h-3l-1-11-4-6 1 8-1 9h-3l1-10-3-8c-4 1-8 1-11 0l-3 6-1 12H7l2-14C4 39 1 33 2 26c1-6 7-9 6-13-3-1-5-4-3-8z"
          fill="#d2d2d2"
        />
        <path d="M14 10c1-4 4-6 8-5 6 4 12 3 16 1l4-4M22 6c4 5 12 6 17 1M12 8c-2-3-2-5-1-7M17 6c-3-2-3-4-2-6M21 5c-2-2-1-4 0-6M26 6c-2-3 0-5 2-6M31 7c-1-3 0-5 2-6" fill="none" stroke="#d2d2d2" strokeWidth="1.300" />
      </svg>
      <div className="flex flex-col gap-[2px] ml-[4px] whitespace-nowrap">
        <div className="flex items-center h-[32px] font-medium">
          <span className="font-[Roboto,sans-serif] text-[34px] leading-[32px]">3D</span>
          <span className="text-[27px] leading-[32px]">溜溜网</span>
        </div>
        <span className="font-['DejaVu_Sans',sans-serif] font-extralight text-[23px] leading-[24px]">3D66.COM</span>
      </div>
    </div>
  );
}

export default function App() {
  return (
    <div className="relative flex flex-col min-h-screen overflow-hidden font-['Open_Sans','Noto_Sans_CJK_SC',sans-serif] text-[9px] leading-3 text-[#ececec] bg-[#363636]">
      <header className="flex">
        <button aria-label="应用程序菜单" className="flex items-center justify-center gap-[2px] w-[30px] shrink-0 border border-[#2c2c2c] bg-linear-to-b from-[#b0b0b0] to-[#777]">
          <svg viewBox="0 0 18 20" className="w-[18px] h-[20px]" aria-hidden="true">
            <path d="M7 1h4l6 15-4 1L8 5z" fill="#d3313b" />
            <path d="M7 1h3L9 8 4 19H0z" fill="#b01b26" />
            <path d="M3 14c3-3 7-4 10-3l1 3c-4-1-8 0-11 3z" fill="#e04a52" />
          </svg>
          <Caret className="w-[5px] h-[3px] text-[#333]" />
        </button>
        <div className="flex-1 min-w-0">
          <TitleBar />
          <div className="flex items-center h-[16px] pl-[10px] pr-[3px] bg-linear-to-b from-[#909090] to-[#616161]">
            <nav className="flex gap-[18px] whitespace-nowrap">
              {menus.map((m) => (
                <button key={m}>{m}</button>
              ))}
            </nav>
            <div className="flex items-center gap-[5px] ml-auto">
              <span className="w-[7px] h-[2px] mt-[5px] bg-[#222]" />
              <svg viewBox="0 0 8 8" className="size-[8px]" fill="none" stroke="#222" aria-hidden="true">
                <path d="M.5 2.500h5v5h-5zM2.500 2V.5h5v5H6" />
              </svg>
              <svg viewBox="0 0 6 6" className="size-[6px]" stroke="#222" strokeWidth="1.500" aria-hidden="true">
                <path d="m0 0 6 6M6 0 0 6" />
              </svg>
            </div>
          </div>
        </div>
      </header>

      <nav className="flex items-center gap-[14px] h-[15px] pl-[3px] whitespace-nowrap bg-[#4d4d4d] text-[#c9c9c9]">
        <a href="#home" className="flex items-center h-full px-[5px] -mr-[6px] text-white border-x border-t border-[#777] bg-[#656565]">默认</a>
        {tabs.map((t) => (
          <a key={t} href={`#${t}`}>{t}</a>
        ))}
        <button aria-label="显示选项" className="flex items-center gap-[4px] ml-[10px]">
          <span className="flex items-center justify-center w-[9px] h-[6px] rounded-sm bg-gray-200">
            <span className="size-[2px] bg-gray-700" />
          </span>
          <Caret className="w-[4px] h-[3px]" />
        </button>
      </nav>

      <Ribbon />
      <FileTabs />
      <Canvas />
      <StatusBar />
      <Taskbar />
      <Watermark />
    </div>
  );
}
